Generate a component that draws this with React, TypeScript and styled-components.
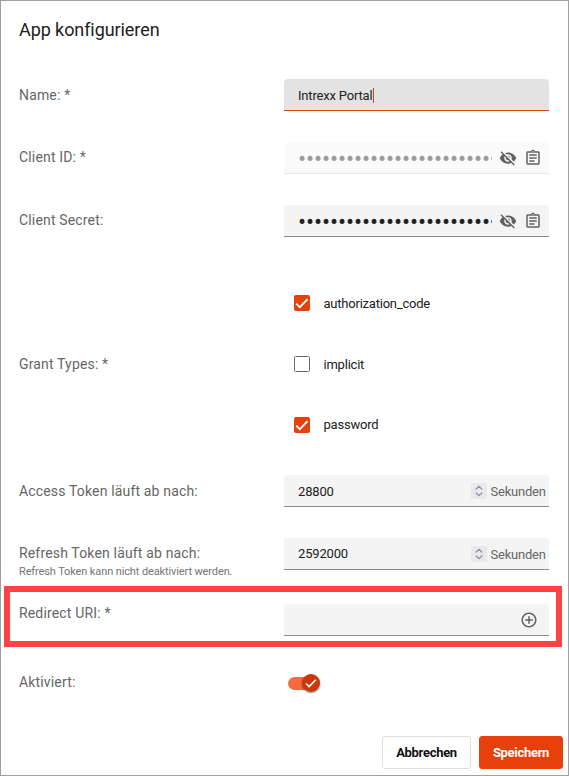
import React from "react";
import styled, { createGlobalStyle, css } from "styled-components";
import { MdVisibilityOff, MdOutlineAssignment, MdAddCircleOutline } from "react-icons/md";

const GlobalStyle = createGlobalStyle`
  *, *::before, *::after { box-sizing: border-box; }
  body {
    margin: 0;
    background: #fff;
    font-family: Roboto, "Liberation Sans", sans-serif;
  }
`;

const Dialog = styled.main`
  display: flex;
  flex-direction: column;
  width: 569px;
  height: 776px;
  padding: 0 5px 6px 18px;
  border: 1px solid #a0a0a0;
  background: #fff;
  overflow: hidden;
`;

const Title = styled.h1`
  height: 78px;
  margin: 0;
  padding-top: 17px;
  font-size: 18px;
  font-weight: 400;
  line-height: 24px;
  letter-spacing: -0.08px;
  color: #212121;
`;

const Row = styled.div<{ $height?: number }>`
  position: relative;
  display: grid;
  grid-template-columns: 265px 265px;
  align-items: start;
  flex: none;
  height: ${(p) => p.$height ?? 63}px;
`;

const LabelCell = styled.div<{ $top?: number }>`
  margin-top: ${(p) => p.$top ?? 6}px;
`;

const Label = styled.label`
  display: block;
  font-size: 14px;
  line-height: 20px;
  letter-spacing: 0.16px;
  color: #666;
`;

const Hint = styled.div`
  padding-top: 1px;
  font-size: 11px;
  line-height: 16px;
  letter-spacing: -0.12px;
  color: #757575;
`;

type FieldState = "normal" | "focused" | "disabled";

const fieldColors = {
  normal: css`
    background: #f4f4f4;
    border-color: #8c8c8c;
    color: #212121;
  `,
  focused: css`
    background: #e3e3e3;
    border-color: #e8400c;
    color: #212121;
  `,
  disabled: css`
    background: #fafafa;
    border-color: #e6e6e6;
    color: #9c9c9c;
  `,
};

const Field = styled.div<{ $state?: FieldState }>`
  display: flex;
  align-items: center;
  height: 32px;
  padding-left: 14px;
  border-bottom: 1px solid;
  border-radius: 4px 4px 0 0;
  font-size: 13px;
  line-height: 16px;
  letter-spacing: -0.18px;
  ${(p) => fieldColors[p.$state ?? "normal"]}
`;

const Value = styled.span<{ $raised?: boolean }>`
  flex: 1;
  padding-top: ${(p) => (p.$raised ? 0 : 2)}px;
`;

const Caret = styled.span`
  display: inline-block;
  width: 1px;
  height: 15px;
  vertical-align: -3px;
  background: #e8400c;
`;

const Secret = styled.span`
  display: grid;
  grid-template-columns: repeat(24, 8px) 1px;
  align-items: center;
  justify-items: center;
  flex: none;
  font-size: 24px;
  line-height: 28px;
  letter-spacing: 0;
`;

const Dot = styled.span`
  padding-top: 2px;
`;

const DotEdge = styled.i`
  width: 1px;
  height: 3px;
  margin: 2px 0 0 1px;
  background: currentColor;
  opacity: 0.6;
`;

const FieldIcons = styled.span<{ $end: number }>`
  display: flex;
  gap: 7px;
  margin-left: auto;
  margin-right: ${(p) => p.$end}px;
  font-size: 18px;
  color: #616161;
`;

const Spinner = styled.span`
  display: grid;
  place-items: center;
  width: 16px;
  height: 16px;
  margin-right: 3.5px;
  background: #e9e9ed;
`;

const Unit = styled.span`
  width: 58.5px;
  padding-top: 2px;
  letter-spacing: -0.23px;
  color: #666;
`;

const Options = styled.div`
  display: flex;
  flex-direction: column;
  gap: 45px;
  padding: 2px 0 0 10px;
`;

const Option = styled.div`
  display: flex;
  align-items: center;
  gap: 13.5px;
  height: 16px;
  font-size: 13px;
  line-height: 16px;
  letter-spacing: -0.22px;
  color: #212121;
`;

const OptionText = styled.span`
  padding-top: 2px;

  ${Option}:last-child & {
    padding-top: 0;
  }
`;

const Box = styled.span<{ $checked: boolean }>`
  display: grid;
  place-items: center;
  width: 16px;
  height: 16px;
  border: 1px solid ${(p) => (p.$checked ? "#e8400c" : "#6b6b6b")};
  border-radius: 1.5px;
  background: ${(p) => (p.$checked ? "#e8400c" : "#fff")};
`;

const Highlight = styled.div`
  position: absolute;
  left: -15px;
  top: -18px;
  width: 558px;
  height: 61px;
  border: 6px solid #ff4242;
  pointer-events: none;
`;

const Switch = styled.div`
  display: flex;
  align-items: center;
  justify-content: flex-end;
  width: 32px;
  height: 13px;
  margin: 7px 0 0 4px;
  border-radius: 7px;
  background: linear-gradient(#f56b3d, #f56b3d) left / 26px 100% no-repeat;
`;

const Thumb = styled.span`
  display: grid;
  place-items: center;
  flex: none;
  width: 18px;
  height: 18px;
  margin-bottom: 1px;
  border-radius: 50%;
  background: #cb390b;
  box-shadow: 0 1px 2px rgba(0, 0, 0, 0.45);
`;

const Footer = styled.footer`
  display: flex;
  justify-content: flex-end;
  gap: 8px;
  margin-top: auto;
`;

const Button = styled.button<{ $primary?: boolean }>`
  width: ${(p) => (p.$primary ? 84 : 89)}px;
  height: 33px;
  padding: 0;
  border: 1px solid ${(p) => (p.$primary ? "#e8400c" : "#dedede")};
  border-radius: 3px;
  background: ${(p) => (p.$primary ? "#e8400c" : "#fff")};
  font-family: inherit;
  font-size: 13px;
  font-weight: 700;
  letter-spacing: -0.3px;
  color: ${(p) => (p.$primary ? "#fff" : "#111")};
`;

function Check({ size = 14 }: { size?: number }) {
  return (
    <svg width={size} height={size} viewBox="0 0 14 14" fill="none">
      <path d="M1.2 7.6 4.8 11.2 12.6 3.2" stroke="#fff" strokeWidth="1.9" />
    </svg>
  );
}

function SecretField({ state }: { state?: FieldState }) {
  return (
    <Field $state={state}>
      <Secret>
        {Array.from({ length: 24 }, (_, i) => (
          <Dot key={i}>•</Dot>
        ))}
        <DotEdge />
      </Secret>
      <FieldIcons $end={7}>
        <MdVisibilityOff />
        <MdOutlineAssignment />
      </FieldIcons>
    </Field>
  );
}

function SecondsField({ value, raised }: { value: string; raised?: boolean }) {
  return (
    <Field>
      <Value $raised={raised}>{value}</Value>
      <Spinner>
        <svg width="8" height="12" viewBox="0 0 8 12" fill="none" stroke="#8f8f9d" strokeWidth="1.3">
          <path d="M1.2 4 4 1.3 6.8 4M1.2 8 4 10.7 6.8 8" strokeLinecap="round" />
        </svg>
      </Spinner>
      <Unit>Sekunden</Unit>
    </Field>
  );
}

const grantTypes = [
  { name: "authorization_code", checked: true },
  { name: "implicit", checked: false },
  { name: "password", checked: true },
];

export default function App() {
  return (
    <>
      <GlobalStyle />
      <Dialog>
        <Title>App konfigurieren</Title>
        <Row>
          <LabelCell>
            <Label>Name: *</Label>
          </LabelCell>
          <Field $state="focused">
            <Value>
              Intrexx Portal
              <Caret />
            </Value>
          </Field>
        </Row>
        <Row>
          <LabelCell $top={5}>
            <Label>Client ID: *</Label>
          </LabelCell>
          <SecretField state="disabled" />
        </Row>
        <Row $height={88}>
          <LabelCell $top={5}>
            <Label>Client Secret:</Label>
          </LabelCell>
          <SecretField />
        </Row>
        <Row $height={182}>
          <LabelCell $top={61}>
            <Label>Grant Types: *</Label>
          </LabelCell>
          <Options>
            {grantTypes.map((g) => (
              <Option key={g.name}>
                <Box $checked={g.checked}>{g.checked && <Check />}</Box>
                <OptionText>{g.name}</OptionText>
              </Option>
            ))}
          </Options>
        </Row>
        <Row>
          <LabelCell>
            <Label>Access Token läuft ab nach:</Label>
          </LabelCell>
          <SecondsField value="28800" />
        </Row>
        <Row $height={66}>
          <LabelCell $top={5}>
            <Label>Refresh Token läuft ab nach:</Label>
            <Hint>Refresh Token kann nicht deaktiviert werden.</Hint>
          </LabelCell>
          <SecondsField value="2592000" raised />
        </Row>
        <Row $height={66}>
          <LabelCell $top={-1}>
            <Label>Redirect URI: *</Label>
          </LabelCell>
          <Field>
            <FieldIcons $end={11}>
              <MdAddCircleOutline />
            </FieldIcons>
          </Field>
          <Highlight />
        </Row>
        <Row $height={32}>
          <LabelCell $top={2}>
            <Label>Aktiviert:</Label>
          </LabelCell>
          <Switch>
            <Thumb>
              <Check size={12} />
            </Thumb>
          </Switch>
        </Row>
        <Footer>
          <Button>Abbrechen</Button>
          <Button $primary>Speichern</Button>
        </Footer>
      </Dialog>
    </>
  );
}
